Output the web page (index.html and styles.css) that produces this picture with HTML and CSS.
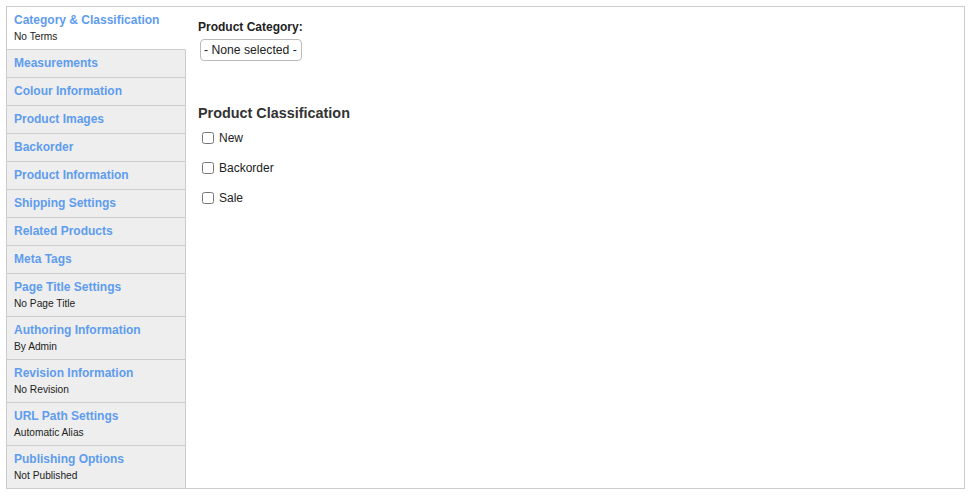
FILE: index.html
```html
<!DOCTYPE html>
<html>
  <head>
    <meta charset="utf-8" />
    <title>Product edit</title>

    <link rel="stylesheet" href="styles.css">
  </head>
  <body>
    <div class="vertical-tabs">
      <ul class="tab-list">
        <li class="tab selected">
          <a class="tab-title" href="#">Category &amp; Classification</a>
          <span class="tab-summary">No Terms</span>
        </li>
        <li class="tab"><a class="tab-title" href="#">Measurements</a></li>
        <li class="tab"><a class="tab-title" href="#">Colour Information</a></li>
        <li class="tab"><a class="tab-title" href="#">Product Images</a></li>
        <li class="tab"><a class="tab-title" href="#">Backorder</a></li>
        <li class="tab"><a class="tab-title" href="#">Product Information</a></li>
        <li class="tab"><a class="tab-title" href="#">Shipping Settings</a></li>
        <li class="tab"><a class="tab-title" href="#">Related Products</a></li>
        <li class="tab"><a class="tab-title" href="#">Meta Tags</a></li>
        <li class="tab">
          <a class="tab-title" href="#">Page Title Settings</a>
          <span class="tab-summary">No Page Title</span>
        </li>
        <li class="tab">
          <a class="tab-title" href="#">Authoring Information</a>
          <span class="tab-summary">By Admin</span>
        </li>
        <li class="tab">
          <a class="tab-title" href="#">Revision Information</a>
          <span class="tab-summary">No Revision</span>
        </li>
        <li class="tab">
          <a class="tab-title" href="#">URL Path Settings</a>
          <span class="tab-summary">Automatic Alias</span>
        </li>
        <li class="tab last">
          <a class="tab-title" href="#">Publishing Options</a>
          <span class="tab-summary">Not Published</span>
        </li>
      </ul>

      <div class="tab-pane">
        <label class="field-label" for="product-category">Product Category:</label>
        <select class="field-select" id="product-category">
          <option>- None selected -</option>
        </select>

        <h3 class="pane-heading">Product Classification</h3>

        <div class="check-row">
          <input type="checkbox" id="class-new" />
          <label for="class-new">New</label>
        </div>
        <div class="check-row">
          <input type="checkbox" id="class-backorder" />
          <label for="class-backorder">Backorder</label>
        </div>
        <div class="check-row">
          <input type="checkbox" id="class-sale" />
          <label for="class-sale">Sale</label>
        </div>
      </div>
    </div>
  </body>
</html>
```

FILE: styles.css
```css
/* Page */

html,
body {
  margin: 0;
  padding: 0;
  background: #fff;
  color: #222;
  font-family: "Liberation Sans", Arial, sans-serif;
  font-size: 12px;
}

/* Vertical tabs */

.vertical-tabs {
  display: flex;
  margin: 6px 9px 0 6px;
  border: 1px solid #ccc;
}

.tab-list {
  display: flex;
  flex-direction: column;
  flex: 0 0 179px;
  margin: 0;
  padding: 0;
  list-style: none;
}

.tab {
  display: flex;
  flex-direction: column;
  box-sizing: border-box;
  height: 28px;
  padding: 6px 7px 0;
  background: #eee;
  border-right: 1px solid #ccc;
  border-bottom: 1px solid #ccc;
}

.tab.selected {
  background: #fff;
  border-right-color: #fff;
}

.tab-title {
  color: #5e9cef;
  font-weight: bold;
  font-size: 12px;
  line-height: 15px;
  text-decoration: none;
}

.tab:has(.tab-summary) {
  height: 43px;
}

.tab.last {
  border-bottom: 0;
}

.tab.last:has(.tab-summary) {
  height: 42px;
}

.tab-summary {
  margin-top: 1px;
  font-size: 10.2px;
  line-height: 15px;
  color: #222;
}

/* Pane */

.tab-pane {
  flex: 1;
  display: flex;
  flex-direction: column;
  align-items: flex-start;
  padding: 13px 12px;
}

.field-label {
  font-weight: bold;
  line-height: 15px;
  color: #222;
}

.field-select {
  appearance: none;
  -webkit-appearance: none;
  box-sizing: border-box;
  width: 102px;
  height: 22px;
  margin: 4px 0 0 2px;
  padding: 0 3px;
  border: 1px solid #bbb;
  border-radius: 4px;
  background: #fff;
  color: #222;
  font-family: "Liberation Sans", Arial, sans-serif;
  font-size: 12.2px;
}

.pane-heading {
  margin: 43px 0 1px;
  font-size: 14.4px;
  line-height: 18px;
  color: #333;
}

.check-row {
  display: flex;
  align-items: center;
  height: 30px;
}

.check-row input {
  width: 12px;
  height: 12px;
  margin: 0 5px 0 4px;
}

.check-row label {
  line-height: 15px;
  color: #222;
}
```
